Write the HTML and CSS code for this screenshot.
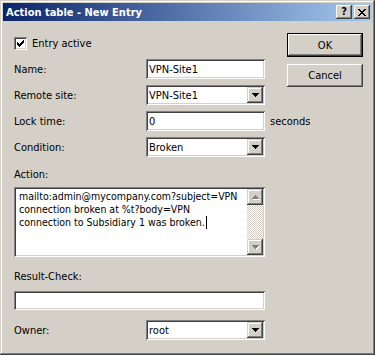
FILE: index.html
```html
<!DOCTYPE html>
<html lang="en">
<head>
  <meta charset="UTF-8">
  <title>Action table - New Entry</title>
  <link rel="stylesheet" href="styles.css">
</head>
<body>

  <div class="window">

    <!-- Title bar -->
    <div class="titlebar">
      <span class="title">Action table - New Entry</span>
      <div class="title-buttons">
        <div class="tbtn help">?</div>
        <div class="tbtn close">
          <svg width="8" height="7" viewBox="0 0 8 7"><path d="M0 0h2v1h1v1h2v-1h1v-1h2v1h-1v1h-1v1h-1v1h1v1h1v1h1v1h-2v-1h-1v-1h-2v1h-1v1h-2v-1h1v-1h1v-1h1v-1h-1v-1h-1v-1h-1z" fill="#000"/></svg>
        </div>
      </div>
    </div>

    <div class="content">

      <!-- Form fields -->
      <div class="form">
        <div class="check-row">
          <div class="checkbox">
            <svg width="7" height="7" viewBox="0 0 7 7"><path d="M0 2h1v1h1v1h1v-1h1v-1h1v-1h1v-1h1v3h-1v1h-1v1h-1v1h-1v1h-1v-1h-1v-1h-1z" fill="#000"/></svg>
          </div>
          <span>Entry active</span>
        </div>

        <div class="row first">
          <label>Name:</label>
          <div class="field">VPN-Site1</div>
        </div>

        <div class="row">
          <label>Remote site:</label>
          <div class="field select">
            <span>VPN-Site1</span>
            <div class="drop"><svg width="7" height="4" viewBox="0 0 7 4"><path d="M0 0h7v1h-1v1h-1v1h-1v1h-1v-1h-1v-1h-1v-1h-1z" fill="#000"/></svg></div>
          </div>
        </div>

        <div class="row">
          <label>Lock time:</label>
          <div class="field">0</div>
          <span class="unit">seconds</span>
        </div>

        <div class="row">
          <label>Condition:</label>
          <div class="field select">
            <span>Broken</span>
            <div class="drop"><svg width="7" height="4" viewBox="0 0 7 4"><path d="M0 0h7v1h-1v1h-1v1h-1v1h-1v-1h-1v-1h-1v-1h-1z" fill="#000"/></svg></div>
          </div>
        </div>

        <div class="block-label action-label">Action:</div>
        <div class="memo">
          <div class="memo-text">mailto:admin@mycompany.com?subject=VPN<br>connection broken at %t?body=VPN<br>connection to Subsidiary 1 was broken.<span class="caret"></span></div>
          <div class="scrollbar">
            <div class="sbtn"><svg width="7" height="4" viewBox="0 0 7 4"><path d="M3 0h1v1h1v1h1v1h1v1h-7v-1h1v-1h1v-1h1z" fill="#808080"/></svg></div>
            <div class="track"></div>
            <div class="sbtn"><svg width="7" height="4" viewBox="0 0 7 4"><path d="M0 0h7v1h-1v1h-1v1h-1v1h-1v-1h-1v-1h-1v-1h-1z" fill="#808080"/></svg></div>
          </div>
        </div>

        <div class="block-label result-label">Result-Check:</div>
        <div class="field wide"></div>

        <div class="row owner">
          <label>Owner:</label>
          <div class="field select">
            <span>root</span>
            <div class="drop"><svg width="7" height="4" viewBox="0 0 7 4"><path d="M0 0h7v1h-1v1h-1v1h-1v1h-1v-1h-1v-1h-1v-1h-1z" fill="#000"/></svg></div>
          </div>
        </div>
      </div>

      <!-- Dialog buttons -->
      <div class="side">
        <div class="button default">OK</div>
        <div class="button">Cancel</div>
      </div>

    </div>
  </div>

</body>
</html>
```

FILE: styles.css
```css
body {
  margin: 0;
  font-family: "DejaVu Sans Condensed", "DejaVu Sans", sans-serif;
  font-size: 11px;
  color: #000;
}

.window {
  width: 375px;
  height: 355px;
  box-sizing: border-box;
  padding: 3px;
  background: #d4d0c8;
  box-shadow: inset -1px -1px #404040, inset 1px 1px #d4d0c8,
              inset -2px -2px #808080, inset 2px 2px #fff;
  display: flex;
  flex-direction: column;
}

.titlebar {
  height: 18px;
  flex: none;
  display: flex;
  align-items: center;
  justify-content: space-between;
  padding: 0 2px 0 3px;
  background: linear-gradient(to right, #0a246a, #a6caf0);
}

.title {
  color: #fff;
  font-weight: bold;
}

.title-buttons {
  display: flex;
  gap: 2px;
}

.tbtn {
  width: 16px;
  height: 14px;
  box-sizing: border-box;
  background: #d4d0c8;
  box-shadow: inset -1px -1px #404040, inset 1px 1px #fff,
              inset -2px -2px #808080;
  display: flex;
  align-items: center;
  justify-content: center;
  font-weight: bold;
  font-size: 11px;
  line-height: 14px;
}

.content {
  display: flex;
  padding: 12px 0 0 11px;
}

.form {
  width: 251px;
  flex: none;
}

.check-row {
  margin-top: 4px;
  height: 13px;
  display: flex;
  align-items: center;
}

.checkbox {
  width: 13px;
  height: 13px;
  box-sizing: border-box;
  background: #fff;
  box-shadow: inset 1px 1px #808080, inset -1px -1px #fff,
              inset 2px 2px #404040, inset -2px -2px #d4d0c8;
  display: flex;
  align-items: center;
  justify-content: center;
  margin-right: 5px;
}

.row {
  display: flex;
  align-items: center;
  height: 20px;
  margin-top: 6px;
}

.row.first {
  margin-top: 9px;
}

.row label {
  width: 132px;
  flex: none;
}

.field {
  width: 119px;
  height: 20px;
  flex: none;
  box-sizing: border-box;
  padding: 0 3px;
  background: #fff;
  box-shadow: inset 1px 1px #808080, inset -1px -1px #fff,
              inset 2px 2px #404040, inset -2px -2px #d4d0c8;
  display: flex;
  align-items: center;
}

.field.select {
  justify-content: space-between;
  padding-right: 2px;
}

.drop {
  width: 16px;
  height: 16px;
  box-sizing: border-box;
  background: #d4d0c8;
  box-shadow: inset -1px -1px #404040, inset 1px 1px #d4d0c8,
              inset -2px -2px #808080, inset 2px 2px #fff;
  display: flex;
  align-items: center;
  justify-content: center;
}

.unit {
  flex: none;
  margin-left: 5px;
  white-space: nowrap;
}

.block-label {
  height: 14px;
  line-height: 14px;
}

.action-label {
  margin-top: 11px;
}

.memo {
  margin-top: 5px;
  height: 70px;
  box-sizing: border-box;
  padding: 2px;
  background: #fff;
  box-shadow: inset 1px 1px #808080, inset -1px -1px #fff,
              inset 2px 2px #404040, inset -2px -2px #d4d0c8;
  display: flex;
}

.memo-text {
  flex: 1;
  min-width: 0;
  padding: 1px 3px;
  line-height: 13px;
  font-size: 10.5px;
  white-space: nowrap;
}

.caret {
  display: inline-block;
  width: 1px;
  height: 13px;
  background: #000;
  vertical-align: top;
  margin-left: 1px;
}

.scrollbar {
  width: 16px;
  flex: none;
  display: flex;
  flex-direction: column;
}

.sbtn {
  width: 16px;
  height: 16px;
  box-sizing: border-box;
  background: #d4d0c8;
  box-shadow: inset -1px -1px #404040, inset 1px 1px #d4d0c8,
              inset -2px -2px #808080, inset 2px 2px #fff;
  display: flex;
  align-items: center;
  justify-content: center;
}

.sbtn svg {
  filter: drop-shadow(1px 1px 0 #fff);
}

.track {
  flex: 1;
  background-image: conic-gradient(#fff 25%, #d4d0c8 0 50%, #fff 0 75%, #d4d0c8 0);
  background-size: 2px 2px;
}

.result-label {
  margin-top: 13px;
}

.field.wide {
  width: 251px;
  height: 19px;
  margin-top: 7px;
}

.row.owner {
  margin-top: 10px;
}

.side {
  margin-left: 22px;
  display: flex;
  flex-direction: column;
  gap: 7px;
}

.button {
  width: 76px;
  height: 23px;
  box-sizing: border-box;
  background: #d4d0c8;
  box-shadow: inset -1px -1px #404040, inset 1px 1px #fff,
              inset -2px -2px #808080, inset 2px 2px #d4d0c8;
  display: flex;
  align-items: center;
  justify-content: center;
}

.button.default {
  height: 24px;
  box-shadow: inset 0 0 0 1px #000, inset -2px -2px #404040,
              inset 2px 2px #fff, inset -3px -3px #808080;
}
```
